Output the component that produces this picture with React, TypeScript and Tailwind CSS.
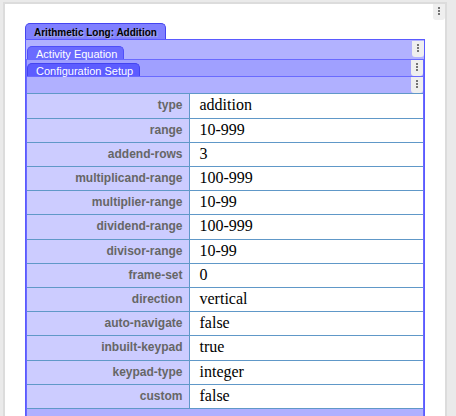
const settings = [
  { name: 'type', value: 'addition' },
  { name: 'range', value: '10-999' },
  { name: 'addend-rows', value: '3' },
  { name: 'multiplicand-range', value: '100-999' },
  { name: 'multiplier-range', value: '10-99' },
  { name: 'dividend-range', value: '100-999' },
  { name: 'divisor-range', value: '10-99' },
  { name: 'frame-set', value: '0' },
  { name: 'direction', value: 'vertical' },
  { name: 'auto-navigate', value: 'false' },
  { name: 'inbuilt-keypad', value: 'true' },
  { name: 'keypad-type', value: 'integer' },
  { name: 'custom', value: 'false' },
];

const MenuButton = ({ label }: { label: string }) => (
  <button
    type="button"
    aria-label={label}
    className="flex h-4 w-3 shrink-0 flex-col items-center gap-px rounded-b-[3px] bg-[#efefef] pt-[3px]"
  >
    <span className="size-0.5 bg-[#757575]" />
    <span className="size-0.5 bg-[#757575]" />
    <span className="size-0.5 bg-[#757575]" />
  </button>
);

const App = () => {
  return (
    <div className="min-h-screen bg-[#eaeaea] pt-[2px] pr-[9px] pl-[3px] font-['Liberation_Sans',Arial,sans-serif]">
      <main className="min-h-[calc(100vh-2px)] border-x-2 border-t-2 border-[#dcdcdc] bg-white">
        <div className="flex justify-end">
          <MenuButton label="Page menu" />
        </div>

        <section className="mr-5 ml-5 pt-[3px]">
          <h1 className="w-fit rounded-t-[5px] border border-b-0 border-[#4444f0] bg-[#8080ff] px-2 pt-[3px] text-[10px] leading-[12px] font-bold text-black text-shadow-[1px_1px_1px_#b4b4e0]">
            Arithmetic Long: Addition
          </h1>

          <div className="border border-[#5a5aff] bg-[#b2b2ff]">
            <div className="flex h-[19px] items-start justify-between pl-px">
              <h2 className="mt-[6px] h-[13px] rounded-t-[5px] border border-b-0 border-[#5050f8] bg-[#6b6bff] pr-1.5 pl-2 text-[11px] leading-[14px] text-white">
                Activity Equation
              </h2>
              <div className="pt-px">
                <MenuButton label="Activity menu" />
              </div>
            </div>

            <div className="border border-b-0 border-[#6a6aff]">
              <div className="flex h-4 items-end justify-between bg-[#a0a0ff]">
                <h3 className="h-[13px] rounded-t-[5px] border border-b-0 border-[#4444f0] bg-[#5c5cff] pr-1.5 pl-2 text-[11px] leading-[14px] text-white">
                  Configuration Setup
                </h3>
                <MenuButton label="Configuration menu" />
              </div>

              <div className="flex h-[17px] justify-end border-t border-[#6a6aff] bg-[#b0b0ff]">
                <MenuButton label="Settings menu" />
              </div>

              <table className="w-full border-collapse">
                <tbody>
                  {settings.map((setting) => (
                    <tr key={setting.name} className="h-6 border-y border-[#6098c8] nth-[5n+1]:h-[25px]">
                      <th
                        scope="row"
                        className="w-[162px] border-r border-[#6098c8] bg-[#ccccff] p-0 pr-1.5 pb-0.5 text-right text-xs leading-5 font-bold text-[#666666]"
                      >
                        {setting.name}
                      </th>
                      <td className="bg-white p-0 pb-0.5 pl-2.5 font-['Liberation_Serif','Times_New_Roman',serif] text-base leading-5 text-black">
                        {setting.value}
                      </td>
                    </tr>
                  ))}
                </tbody>
              </table>

              <div className="h-4 bg-[#b0b0ff]" />
            </div>
          </div>
        </section>
      </main>
    </div>
  );
};

export default App;
